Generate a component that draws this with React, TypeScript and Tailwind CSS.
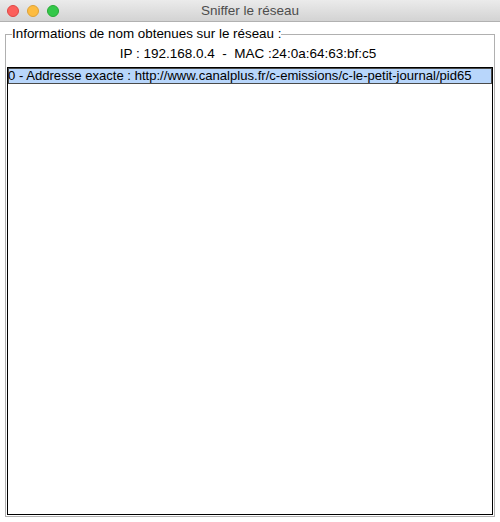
export default function App() {
    const rowText =
        "0 - Addresse exacte : http://www.canalplus.fr/c-emissions/c-le-petit-journal/pid65";

    return (
        <div className="w-[500px] h-[522px] bg-white flex flex-col font-['Liberation_Sans',Arial,sans-serif] text-[13px] text-black">
            {/* title bar */}
            <div className="relative h-[22px] flex items-center justify-center bg-gradient-to-b from-[#ebebeb] to-[#d3d3d3] border-b border-[#b1b1b1]">
                <div className="absolute left-[7px] top-[5px] flex gap-[8px]">
                    <span className="w-[12px] h-[12px] rounded-full bg-[#fc605c] border border-[#df4744]" />
                    <span className="w-[12px] h-[12px] rounded-full bg-[#fdbc40] border border-[#dea236]" />
                    <span className="w-[12px] h-[12px] rounded-full bg-[#34c84a] border border-[#27aa35]" />
                </div>
                <span className="text-[#4d4d4d] text-[13.5px] leading-[16px]">Sniffer le réseau</span>
            </div>

            {/* body */}
            <div className="flex-1 flex flex-col px-[5px] pt-[4px] pb-[5px] min-h-0">
                <fieldset className="flex-1 flex flex-col min-h-0 border border-[#b0b0b0] px-[1px] pb-[1px]">
                    <legend className="ml-[5px] text-[13.4px] leading-[16px]">
                        Informations de nom obtenues sur le réseau :
                    </legend>
                    <div className="mt-[4px] h-[16px] text-[13.5px] leading-[16px] text-center pr-[4px]">
                        IP : 192.168.0.4&nbsp; - &nbsp;MAC :24:0a:64:63:bf:c5
                    </div>
                    <div className="mt-[5px] flex-1 bg-white border border-black overflow-hidden">
                        <div className="h-[16px] leading-[16px] text-[13.1px] bg-[#b8d6fb] shadow-[inset_0_0_0_1px_#4a4a4a] whitespace-nowrap overflow-hidden">
                            {rowText}
                        </div>
                    </div>
                </fieldset>
            </div>
        </div>
    );
}
